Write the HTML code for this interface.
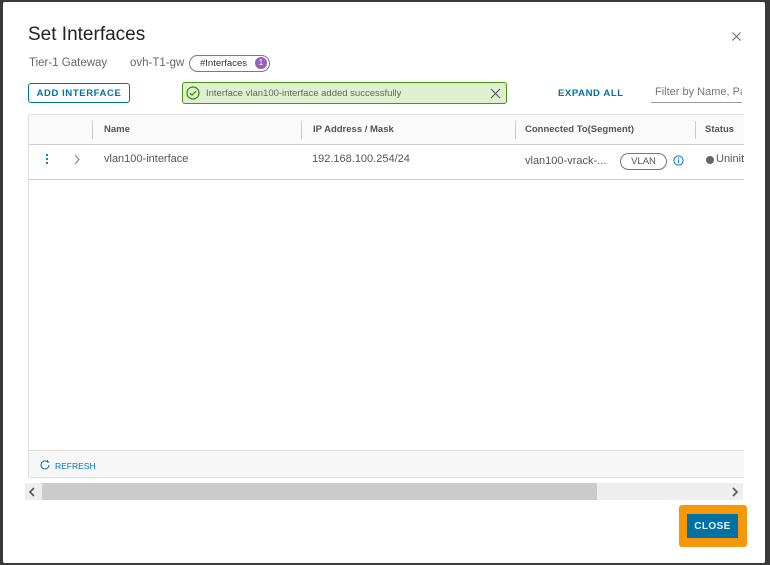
<!DOCTYPE html>
<html><head><style>
*{box-sizing:border-box;margin:0;padding:0}
body{width:770px;height:565px;background:#3a3a3a;font-family:"Liberation Sans",sans-serif;position:relative;overflow:hidden;color:#333}
.dlg{position:absolute;left:3px;top:2px;width:762px;height:561px;background:#fff;border-radius:2px}
.abs{position:absolute}
.t{font-size:11px;color:#565656}
</style></head><body>
<div class="dlg"></div>
<div class="abs" style="left:28px;top:24px;font-size:19px;color:#222">Set Interfaces</div>
<svg class="abs" style="left:732px;top:32px" width="9" height="9"><path d="M0.5 0.5l8 8M8.5 0.5l-8 8" stroke="#666" stroke-width="1"/></svg>
<div class="abs" style="left:29px;top:57px;font-size:11.5px;color:#666">Tier-1 Gateway</div>
<div class="abs" style="left:130px;top:57px;font-size:11.5px;color:#666">ovh-T1-gw</div>
<div class="abs" style="left:189px;top:55px;width:81px;height:17px;border:1.5px solid #9460b8;border-radius:9px;font-size:9.5px;color:#333;padding:2px 0 0 10px">#Interfaces<span style="position:absolute;left:65px;top:1px;width:12px;height:12px;border-radius:50%;background:#9460b8;color:#fff;font-size:8px;text-align:center;line-height:12px">1</span></div>
<div class="abs" style="left:28px;top:83px;width:102px;height:20px;border:1px solid #0072a3;border-radius:3px;color:#0072a3;font-size:9.5px;font-weight:bold;letter-spacing:.6px;text-align:center;line-height:20px">ADD INTERFACE</div>
<div class="abs" style="left:182px;top:82px;width:325px;height:22px;border:1px solid #48960c;border-radius:3px;background:#dff0d0;font-size:9.5px;color:#666;padding:5px 0 0 23px">Interface vlan100-interface added successfully
<svg class="abs" style="left:3px;top:3px" width="14" height="14" viewBox="0 0 14 14"><circle cx="7" cy="7" r="6" fill="none" stroke="#318700" stroke-width="1.2"/><path d="M4 7.2l2 2 4-4" fill="none" stroke="#318700" stroke-width="1.2"/></svg>
<svg class="abs" style="left:307px;top:5px" width="11" height="11" viewBox="0 0 11 11"><path d="M1 1l9 9M10 1l-9 9" stroke="#555" stroke-width="1.1"/></svg></div>
<div class="abs" style="left:558px;top:88px;color:#0072a3;font-size:9.5px;font-weight:bold;letter-spacing:.6px">EXPAND ALL</div>
<div class="abs" style="left:651px;top:85px;width:91px;height:18px;border-bottom:1px solid #999;font-size:11px;color:#777;overflow:hidden;white-space:nowrap;padding:1px 0 0 4px">Filter by Name, Pa</div>
<div class="abs" style="left:28px;top:114px;width:716px;height:364px;border:1px solid #ddd;border-right:none;border-radius:3px 0 0 3px;background:#fff;overflow:hidden">
 <div class="abs" style="left:0;top:0;width:716px;height:30px;background:#fafafa;border-bottom:1px solid #ccc"></div>
 <div class="abs" style="left:63px;top:6px;width:1px;height:18px;background:#ccc"></div>
 <div class="abs" style="left:272px;top:6px;width:1px;height:18px;background:#ccc"></div>
 <div class="abs" style="left:486px;top:6px;width:1px;height:18px;background:#ccc"></div>
 <div class="abs" style="left:666px;top:6px;width:1px;height:18px;background:#ccc"></div>
 <div class="abs t" style="left:75px;top:9px;font-size:9.5px;font-weight:bold;color:#555">Name</div>
 <div class="abs t" style="left:284px;top:9px;font-size:9.5px;font-weight:bold;color:#555">IP Address / Mask</div>
 <div class="abs t" style="left:496px;top:9px;font-size:9.5px;font-weight:bold;color:#555">Connected To(Segment)</div>
 <div class="abs t" style="left:676px;top:9px;font-size:9.5px;font-weight:bold;color:#555">Status</div>
 <div class="abs" style="left:0;top:64px;width:716px;height:1px;background:#ccc"></div>
 <div class="abs" style="left:17px;top:38px;width:2px;height:12px;background:radial-gradient(circle,#0079b8 1px,transparent 1.2px) 0 0/2px 4px"></div>
 <svg class="abs" style="left:44px;top:39px" width="8" height="11"><path d="M2 1l4 4.5-4 4.5" fill="none" stroke="#888" stroke-width="1.2"/></svg>
 <div class="abs t" style="left:75px;top:38px">vlan100-interface</div>
 <div class="abs t" style="left:283px;top:38px">192.168.100.254/24</div>
 <div class="abs t" style="left:496px;top:40px">vlan100-vrack-...</div>
 <div class="abs" style="left:591px;top:38px;width:47px;height:17px;border:1px solid #777;border-radius:9px;font-size:9.5px;color:#555;text-align:center;line-height:15px">VLAN</div>
 <svg class="abs" style="left:644px;top:40px" width="11" height="11"><circle cx="5.5" cy="5.5" r="4.6" fill="none" stroke="#0079b8"/><path d="M5.5 4.5v3.5M5.5 2.6v1" stroke="#0079b8"/></svg>
 <div class="abs" style="left:677px;top:41px;width:8px;height:8px;border-radius:50%;background:#666"></div>
 <div class="abs t" style="left:687px;top:38px">Uninit</div>
 <div class="abs" style="left:0;top:335px;width:716px;height:29px;background:#f7f7f7;border-top:1px solid #ddd"></div>
 <svg class="abs" style="left:10px;top:344px" width="12" height="12"><path d="M10 6a4 4 0 1 1-1.5-3.2M8.5 1v2h2" fill="none" stroke="#0079b8"/></svg>
 <div class="abs" style="left:26px;top:346px;font-size:8.5px;color:#0079b8">REFRESH</div>
</div>
<div class="abs" style="left:25px;top:483px;width:718px;height:17px;background:#eee"></div>
<div class="abs" style="left:42px;top:483px;width:555px;height:17px;background:#cbcbcb"></div>
<svg class="abs" style="left:28px;top:487px" width="8" height="10"><path d="M6 1l-4 4 4 4" fill="none" stroke="#555" stroke-width="1.6"/></svg>
<svg class="abs" style="left:731px;top:487px" width="8" height="10"><path d="M2 1l4 4-4 4" fill="none" stroke="#555" stroke-width="1.6"/></svg>
<div class="abs" style="left:679px;top:505px;width:68px;height:42px;background:#f8960a;border-radius:3px"></div>
<div class="abs" style="left:687px;top:514px;width:51px;height:24px;background:#0072a3;color:#e8f0f5;font-size:10px;font-weight:bold;text-align:center;line-height:25px;letter-spacing:.4px">CLOSE</div>
</body></html>
